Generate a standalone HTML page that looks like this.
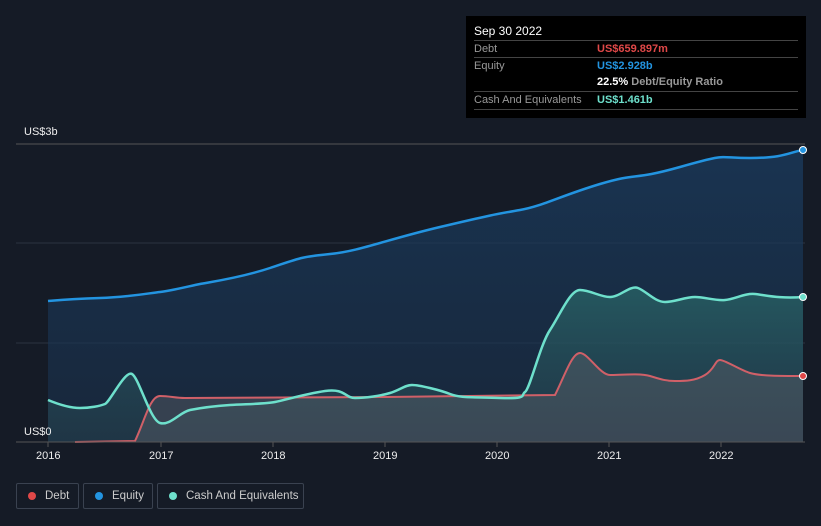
<!DOCTYPE html>
<html><head><meta charset="utf-8"><style>
body{margin:0;width:821px;height:526px;background:#151b26;font-family:"Liberation Sans",sans-serif;overflow:hidden;position:relative}
.tt{position:absolute;left:466px;top:16px;width:340px;height:102px;background:#000;}
.tt .h{position:absolute;left:8px;top:8px;color:#fff;font-size:12px}
.row{position:absolute;left:8px;width:324px;border-top:1px solid #444;height:16px;font-size:11px;color:#999;line-height:17px}
.row span{position:absolute;left:123px;font-weight:bold}
.leg{position:absolute;top:483px;height:26px;border:1px solid #3a4250;border-radius:2px;color:#ccc;font-size:11.5px;line-height:24px;box-sizing:border-box;white-space:nowrap}
.leg i{position:absolute;left:11px;top:8px;width:8px;height:8px;border-radius:50%}
.ax{position:absolute;top:450px;color:#eee;font-size:11px}
</style></head><body>
<svg width="821" height="526" style="position:absolute;left:0;top:0">
<defs>
<linearGradient id="ge" x1="0" y1="0" x2="0" y2="1"><stop offset="0" stop-color="#1a3a5c" stop-opacity=".8"/><stop offset="1" stop-color="#1a3350" stop-opacity=".5"/></linearGradient>
<linearGradient id="gc" x1="0" y1="0" x2="0" y2="1"><stop offset="0" stop-color="#2a6a6a" stop-opacity=".7"/><stop offset="1" stop-color="#2a4a55" stop-opacity=".4"/></linearGradient>
</defs>
<line x1="16" y1="144" x2="805" y2="144" stroke="#555" />
<line x1="16" y1="243" x2="805" y2="243" stroke="#2b3340"/>
<line x1="16" y1="343" x2="805" y2="343" stroke="#2b3340"/>
<path d="M48,301 C60,300 70,299 100,298 S150,293 160,292 S190,286 200,284 S240,278 270,268 S300,257 330,254 S385,240 440,227 S497,214 520,210 S560,196 600,184 S630,181 680,167 S715,158 750,158 S790,152 803,150 L803,442 L48,442Z" fill="url(#ge)"/>
<path d="M48,400 C60,405 70,408 80,408 S100,406 105,404 S125,370 132,374 S150,420 160,423 S180,412 190,410 S215,406 230,405 S265,404 275,402 S305,394 325,391 S345,398 355,398 S380,396 390,393 S405,385 412,385 S440,390 450,394 S470,397 500,398 S520,395 525,392 S540,345 550,330 S570,290 580,290 S600,297 610,297 S630,285 638,288 S655,302 665,302 S685,297 695,297 S715,301 725,300 S745,293 755,294 S780,299 803,297 L803,442 L48,442Z" fill="url(#gc)"/>
<path d="M75,442 L135,441 C145,420 150,396 160,396 S175,398 185,398 L385,397 L555,395 C565,375 572,353 580,353 S600,375 610,375 S640,373 650,376 S665,381 675,381 S695,381 705,375 S715,360 720,360 S740,370 750,373 S780,376 803,376 L803,442 L75,442Z" fill="#5a5f68" fill-opacity=".45"/>
<path d="M48,301 C60,300 70,299 100,298 S150,293 160,292 S190,286 200,284 S240,278 270,268 S300,257 330,254 S385,240 440,227 S497,214 520,210 S560,196 600,184 S630,181 680,167 S715,158 750,158 S790,152 803,150" fill="none" stroke="#2394e0" stroke-width="2.5"/>
<path d="M75,442 L135,441 C145,420 150,396 160,396 S175,398 185,398 L385,397 L555,395 C565,375 572,353 580,353 S600,375 610,375 S640,373 650,376 S665,381 675,381 S695,381 705,375 S715,360 720,360 S740,370 750,373 S780,376 803,376" fill="none" stroke="#d06068" stroke-width="2"/>
<path d="M48,400 C60,405 70,408 80,408 S100,406 105,404 S125,370 132,374 S150,420 160,423 S180,412 190,410 S215,406 230,405 S265,404 275,402 S305,394 325,391 S345,398 355,398 S380,396 390,393 S405,385 412,385 S440,390 450,394 S470,397 500,398 S520,395 525,392 S540,345 550,330 S570,290 580,290 S600,297 610,297 S630,285 638,288 S655,302 665,302 S685,297 695,297 S715,301 725,300 S745,293 755,294 S780,299 803,297" fill="none" stroke="#6ee0cc" stroke-width="2.5"/>
<line x1="16" y1="442" x2="805" y2="442" stroke="#555"/>
<g stroke="#555"><line x1="48" y1="442" x2="48" y2="447"/><line x1="161" y1="442" x2="161" y2="447"/><line x1="273" y1="442" x2="273" y2="447"/><line x1="385" y1="442" x2="385" y2="447"/><line x1="497" y1="442" x2="497" y2="447"/><line x1="609" y1="442" x2="609" y2="447"/><line x1="721" y1="442" x2="721" y2="447"/></g>
<circle cx="803" cy="150" r="3.5" fill="#2394e0" stroke="#fff"/>
<circle cx="803" cy="297" r="3.5" fill="#6ee0cc" stroke="#fff"/>
<circle cx="803" cy="376" r="3.5" fill="#e04848" stroke="#fff"/>
<text x="24" y="135" fill="#eee" font-size="11" font-family="Liberation Sans">US$3b</text>
<text x="24" y="435" fill="#eee" font-size="11" font-family="Liberation Sans">US$0</text>
</svg>
<div class="ax" style="left:36px">2016</div><div class="ax" style="left:149px">2017</div><div class="ax" style="left:261px">2018</div><div class="ax" style="left:373px">2019</div><div class="ax" style="left:485px">2020</div><div class="ax" style="left:597px">2021</div><div class="ax" style="left:709px">2022</div>
<div class="tt"><div class="h">Sep 30 2022</div>
<div class="row" style="top:24px">Debt<span style="color:#e04848">US$659.897m</span></div>
<div class="row" style="top:41px">Equity<span style="color:#2394e0">US$2.928b</span></div>
<div class="row" style="top:58px;border:0"><span style="color:#fff">22.5% <b style="color:#999">Debt/Equity Ratio</b></span></div>
<div class="row" style="top:75px">Cash And Equivalents<span style="color:#6ee0cc">US$1.461b</span></div>
<div class="row" style="top:93px"></div>
</div>
<div class="leg" style="left:16px;width:63px"><i style="background:#e04848"></i><span style="margin-left:28px">Debt</span></div>
<div class="leg" style="left:83px;width:70px"><i style="background:#2394e0"></i><span style="margin-left:28px">Equity</span></div>
<div class="leg" style="left:157px;width:147px"><i style="background:#6ee0cc"></i><span style="margin-left:28px">Cash And Equivalents</span></div>
</body></html>
